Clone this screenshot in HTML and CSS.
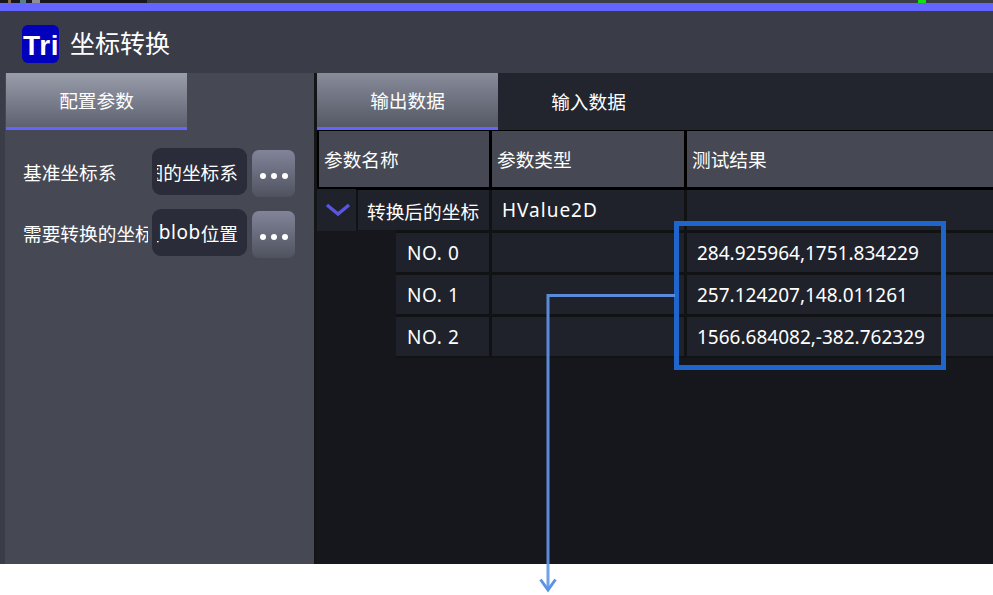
FILE: index.html
```html
<!DOCTYPE html>
<html lang="zh">
<head>
<meta charset="utf-8">
<title>坐标转换</title>
<link rel="stylesheet" href="styles.css">
</head>
<body>
<div class="app">
  <div class="topstrip">
    <span class="speck speck-a"></span><span class="speck speck-b"></span><span class="speck speck-c"></span>
    <span class="strip-rest"><span class="speck-green"></span></span>
  </div>
  <div class="accent"></div>
  <header class="titlebar">
    <div class="logo">Tri</div>
    <h1 class="title">坐标转换</h1>
  </header>
  <main class="body">
    <aside class="left">
      <div class="tabs-left">
        <div class="tab tab-left-active">配置参数</div>
      </div>
      <div class="form">
        <div class="form-row">
          <div class="label">基准坐标系</div>
          <div class="input"><span>原图的坐标系</span></div>
          <button class="more"><i></i><i></i><i></i></button>
        </div>
        <div class="form-row">
          <div class="label">需要转换的坐标系</div>
          <div class="input"><span><b class="latin">_blob</b>位置</span></div>
          <button class="more"><i></i><i></i><i></i></button>
        </div>
      </div>
    </aside>
    <section class="right">
      <div class="tabs-right">
        <div class="tab tab-right-active">输出数据</div>
        <div class="tab">输入数据</div>
      </div>
      <div class="table">
        <div class="thead">
          <div class="th col-name">参数名称</div>
          <div class="th col-type">参数类型</div>
          <div class="th col-fill">测试结果</div>
        </div>
        <div class="row-main">
          <div class="toggle">
            <svg class="chevron" width="26" height="14" viewBox="0 0 26 14"><polyline points="2,2 13,11 24,2"/></svg>
          </div>
          <div class="td cell-tree">转换后的坐标</div>
          <div class="td col-type cell-text cell-type-name">HValue2D</div>
          <div class="td col-fill cell-text"></div>
        </div>
        <div class="row-sub">
          <div class="td col-no">NO. 0</div>
          <div class="td col-type"></div>
          <div class="td col-fill cell-text">284.925964,1751.834229</div>
        </div>
        <div class="row-sub">
          <div class="td col-no">NO. 1</div>
          <div class="td col-type"></div>
          <div class="td col-fill cell-text">257.124207,148.011261</div>
        </div>
        <div class="row-sub">
          <div class="td col-no">NO. 2</div>
          <div class="td col-type"></div>
          <div class="td col-fill cell-text">1566.684082,-382.762329</div>
        </div>
      </div>
    </section>
  </main>
</div>
<div class="callout-box"></div>
<svg class="callout-line" width="993" height="595" viewBox="0 0 993 595">
  <polyline class="line-dark" points="675,295.5 548,295.5 548,564"/>
  <polyline class="line-light" points="548,564 548,590"/>
  <polyline class="line-head" points="540.5,579.5 548,590 555.5,579.5"/>
</svg>
</body>
</html>
```
FILE: styles.css
```css
* { box-sizing: border-box; }
html, body { margin: 0; padding: 0; background: #fff; }
body {
  position: relative;
  width: 993px;
  height: 595px;
  overflow: hidden;
  color: #fff;
  font-family: "Noto Sans CJK SC", "Noto Sans", sans-serif;
  font-size: 18.7px;
}
.app { width: 993px; height: 564px; display: flex; flex-direction: column; }

.topstrip { height: 3px; display: flex; background: #17171d; }
.speck { display: block; height: 3px; }
.speck-a { width: 3px; margin-left: 8px; background: #8a6a4a; }
.speck-b { width: 6px; margin-left: 9px; background: #5a7f8c; }
.speck-c { width: 8px; margin-left: 6px; background: #8d8f92; }
.strip-rest { display: block; margin-left: 107px; flex: 1; background: #3b3d47; }
.speck-green { display: block; width: 8px; height: 3px; margin-left: 771px; background: #12e012; }

.accent { height: 8px; background: #6464ff; }

.titlebar {
  height: 62px;
  display: flex;
  align-items: center;
  padding-left: 22px;
  background: #3a3d48;
}
.logo {
  width: 37px;
  height: 38px;
  margin-top: 4px;
  border-radius: 6px;
  background: #0000bd;
  overflow: hidden;
  font-family: "Liberation Sans", sans-serif;
  font-weight: 700;
  font-size: 28px;
  letter-spacing: 0.6px;
  line-height: 41px;
  white-space: nowrap;
  padding-left: 1px;
}
.title {
  margin: 0 0 0 11px;
  font-size: 25px;
  font-weight: 400;
  line-height: 40px;
}

.body { flex: 1; display: flex; min-height: 0; }

.left {
  width: 317px;
  padding-left: 5px;
  background: #464953;
  box-shadow: inset 5px 0 0 #3a3d48;
  border-right: 3px solid #141517;
}
.tabs-left { height: 57px; padding-left: 1px; }
.tab {
  width: 181px;
  height: 57px;
  display: flex;
  align-items: center;
  justify-content: center;
  padding-bottom: 3px;
}
.tab-left-active {
  background: linear-gradient(#9a9eab, #5d6170);
  border-bottom: 3px solid #6464ff;
  padding-bottom: 2px;
}
.tab-right-active {
  background: linear-gradient(#878b9a, #555965);
  border-bottom: 3px solid #6464ff;
  padding-bottom: 2px;
}

.form { padding: 18px 0 0 18px; display: flex; flex-direction: column; gap: 12px; }
.form-row { display: flex; height: 49px; }
.label {
  width: 125px;
  height: 47px;
  line-height: 47px;
  overflow: hidden;
  white-space: nowrap;
}
.input {
  width: 95px;
  height: 47px;
  margin-left: 4px;
  padding: 0 9px 0 5px;
  border-radius: 9px;
  background: #2a2d39;
  line-height: 47px;
}
.input span {
  display: flex;
  justify-content: flex-end;
  overflow: hidden;
  white-space: nowrap;
}
.latin {
  font-family: "Noto Sans", sans-serif;
  font-size: 19px;
  font-weight: 400;
  letter-spacing: 0.5px;
}
.more {
  width: 43px;
  height: 47px;
  margin: 2px 0 0 5px;
  padding: 5px 0 0;
  border: 0;
  border-radius: 7px;
  background: linear-gradient(#82859a, #4f525e);
  display: flex;
  align-items: center;
  justify-content: center;
  gap: 5px;
}
.more i { display: block; width: 6px; height: 6px; border-radius: 50%; background: #fff; }

.right { flex: 1; display: flex; flex-direction: column; background: #16171c; min-width: 0; }
.tabs-right { height: 57px; display: flex; background: #22252e; }

.table { flex: 1; }
.thead {
  display: flex;
  gap: 3px;
  height: 60px;
  padding: 1px 0 3px 2px;
  background: #000;
}
.th {
  display: flex;
  align-items: center;
  padding: 0 0 2px 5px;
  background: #464953;
}
.col-name { width: 170px; }
.col-type { width: 192px; flex: none; }
.col-fill { flex: 1; }

.row-main { display: flex; height: 40px; background: #111214; }
.toggle {
  width: 39px;
  height: 42px;
  margin: -1px 2px 0 0;
  background: #1f222b;
  display: flex;
  align-items: center;
  justify-content: center;
  padding-left: 2px;
}
.chevron polyline { fill: none; stroke: #5a55e0; stroke-width: 3.4; }

.td {
  display: flex;
  align-items: center;
  background: #1f222b;
  white-space: nowrap;
}
.cell-tree { width: 131px; margin-right: 3px; padding-left: 9px; }
.cell-text {
  padding-left: 10px;
  font-family: "Noto Sans", sans-serif;
  font-size: 19px;
}
.cell-type-name { letter-spacing: 1px; }
.row-main .col-fill { margin-left: 3px; }

.row-sub {
  display: flex;
  gap: 3px;
  height: 42px;
  padding: 3px 0 0 79px;
  background: linear-gradient(#111214, #111214) no-repeat 79px 0 / 100% 100%;
}
.row-sub:last-child { height: 44px; padding-bottom: 2px; }
.col-no {
  width: 93px;
  padding-left: 11px;
  font-family: "Noto Sans", sans-serif;
  font-size: 19px;
  letter-spacing: 0.6px;
}

.callout-box {
  position: absolute;
  left: 674px;
  top: 221px;
  width: 272px;
  height: 149px;
  border: 5px solid #1f66cc;
}
.callout-line { position: absolute; left: 0; top: 0; pointer-events: none; }
.callout-line polyline { fill: none; stroke-width: 3; }
.line-dark { stroke: #5b8bd8; }
.line-light { stroke: #6ea3e8; }
.line-head { stroke: #5b93e6; stroke-width: 4; }
```
